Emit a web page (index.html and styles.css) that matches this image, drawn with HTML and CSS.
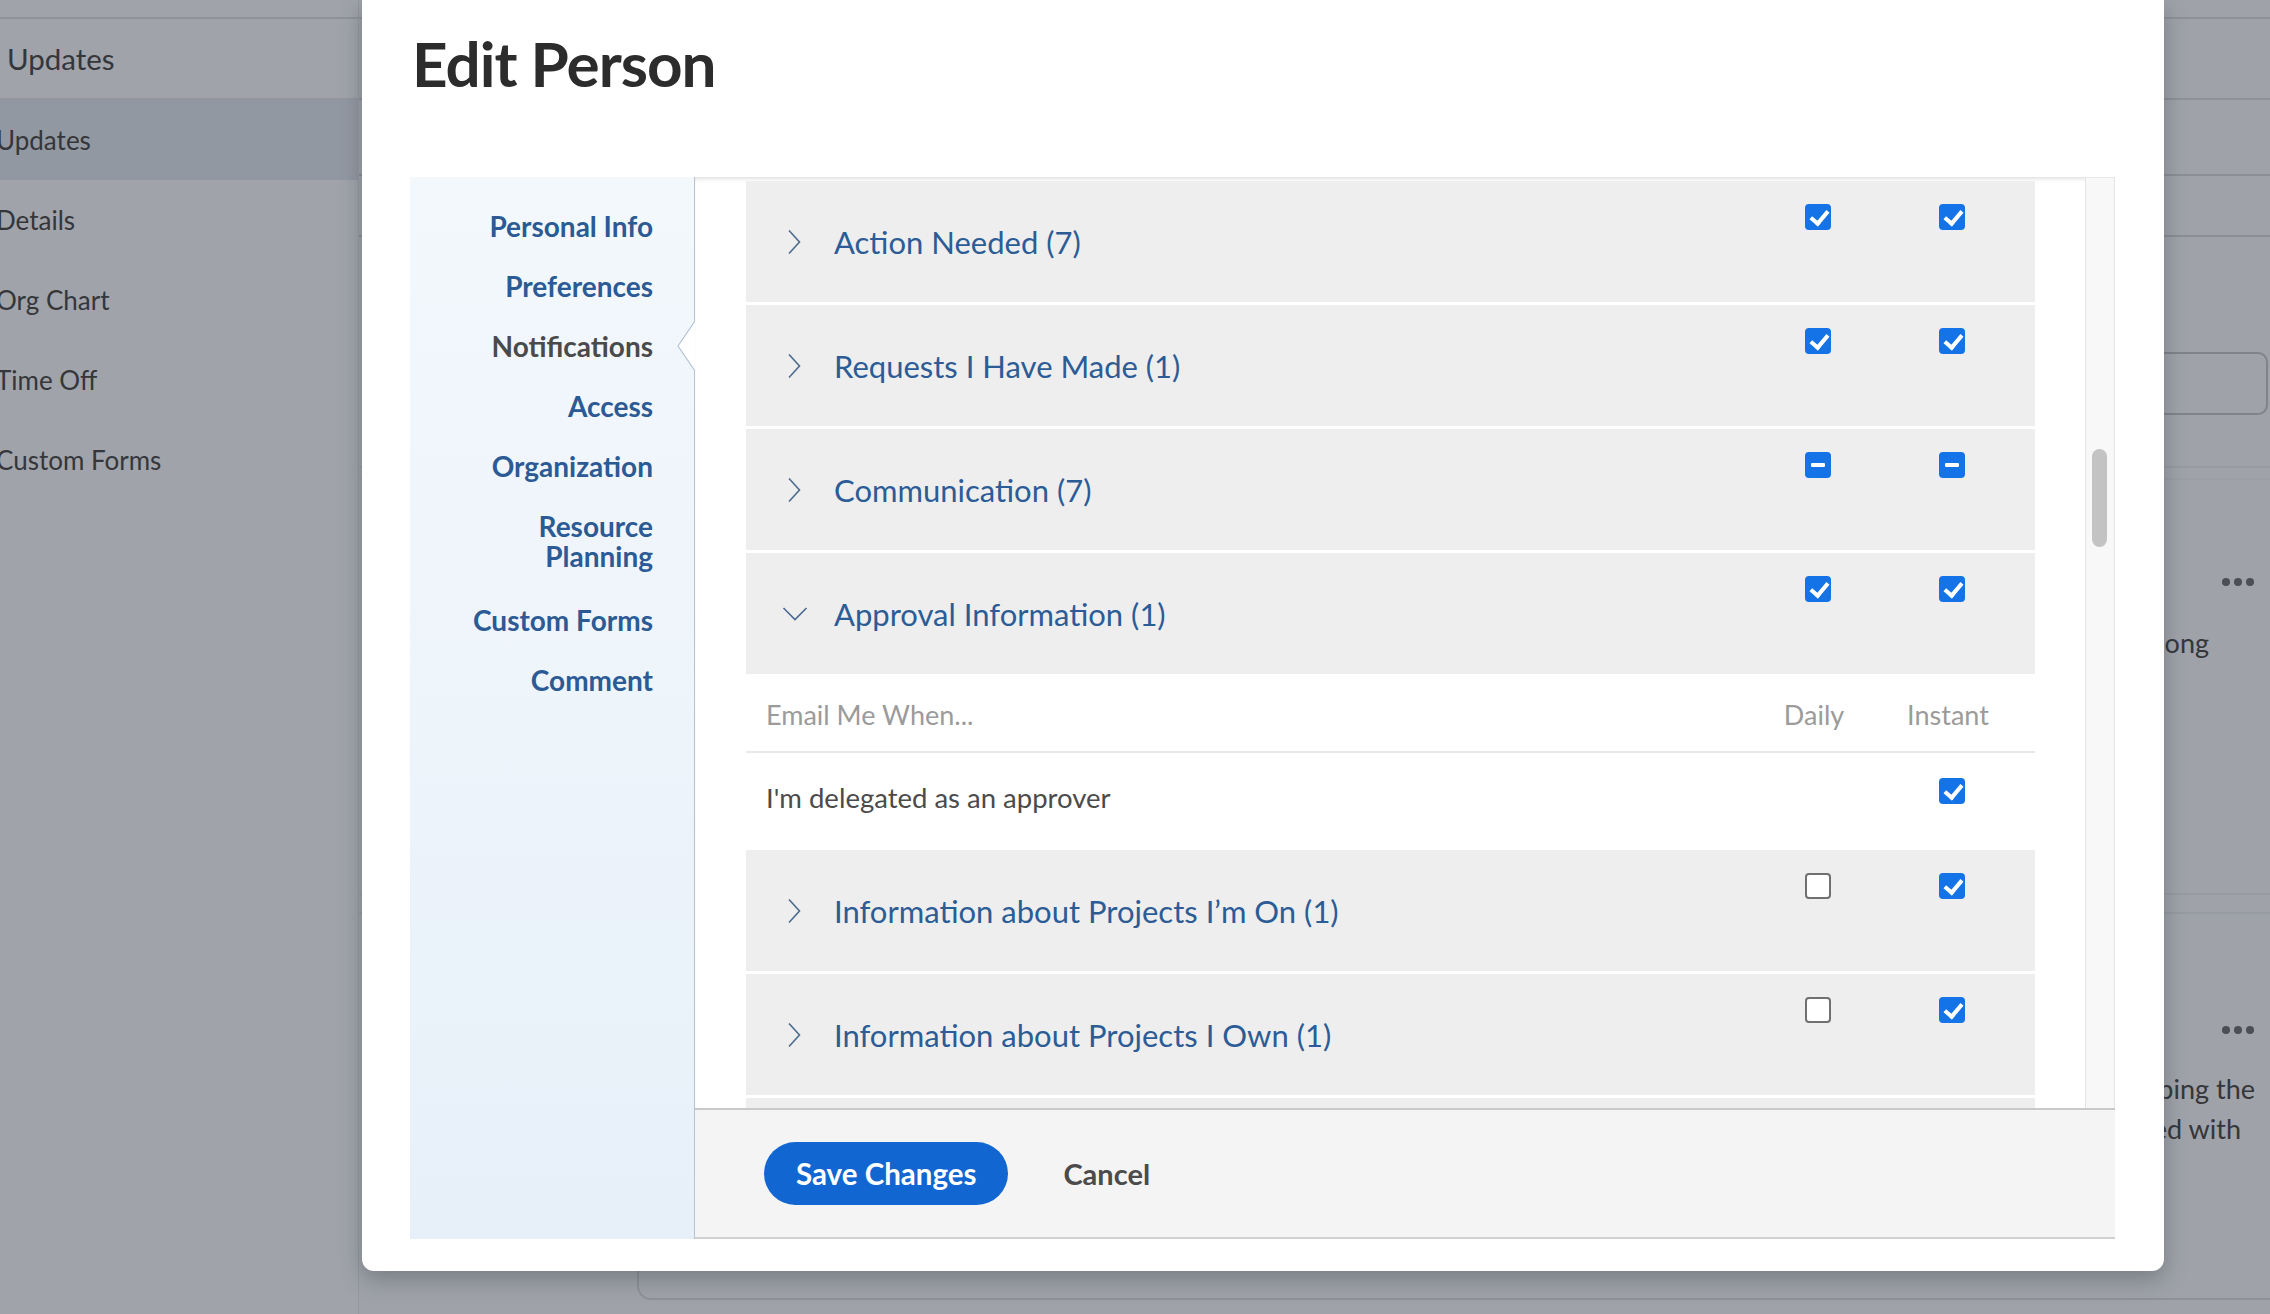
FILE: index.html
```html
<!DOCTYPE html>
<html lang="en">
<head>
<meta charset="utf-8">
<title>Edit Person</title>
<link rel="stylesheet" href="styles.css">
</head>
<body>
<div class="page">
  <aside class="side">
    <div class="side-top"></div>
    <div class="side-head">Updates</div>
    <ul class="side-list">
      <li class="sel">Updates</li>
      <li>Details</li>
      <li>Org Chart</li>
      <li>Time Off</li>
      <li>Custom Forms</li>
    </ul>
  </aside>

  <main class="bg-main">
    <div class="bg-l1"></div>
    <div class="bg-l2"></div>
    <div class="bg-l3"></div>
    <div class="bg-l4"></div>
    <div class="bg-filter"><div class="bg-input"></div></div>
    <div class="bg-gap"></div>
    <div class="bg-card1">
      <div class="dots"><i></i><i></i><i></i></div>
      <p class="bg-text t1">The request is moving along</p>
    </div>
    <div class="bg-sep"></div>
    <div class="bg-card2">
      <div class="dots"><i></i><i></i><i></i></div>
      <p class="bg-text t2">Thanks for helping the</p>
      <p class="bg-text t3">team that worked with</p>
    </div>
  </main>

  <div class="modal">
    <h1 class="modal-title">Edit Person</h1>
    <div class="panel">
      <nav class="tabs">
        <a class="tab">Personal Info</a>
        <a class="tab">Preferences</a>
        <a class="tab active">Notifications</a>
        <a class="tab">Access</a>
        <a class="tab">Organization</a>
        <a class="tab two">Resource<br>Planning</a>
        <a class="tab">Custom Forms</a>
        <a class="tab">Comment</a>
        <svg class="notch" viewBox="0 0 18 50" width="18" height="50"><polygon points="18,0 1,25 18,50" fill="#fff"/><polyline points="18,0 1,25 18,50" fill="none" stroke="#b4c4d6" stroke-width="1.2"/></svg>
      </nav>

      <section class="content">
        <div class="viewport">
          <div class="list">
            <div class="row">
              <span class="chev"><svg viewBox="0 0 14 26" width="14" height="26"><polyline points="2,1.5 12.5,13 2,24.5" fill="none" stroke="#4b6a90" stroke-width="1.6"/></svg></span>
              <span class="label">Action Needed (7)</span>
              <span class="cell"><span class="cb on"></span></span>
              <span class="cell"><span class="cb on"></span></span>
            </div>
            <div class="row">
              <span class="chev"><svg viewBox="0 0 14 26" width="14" height="26"><polyline points="2,1.5 12.5,13 2,24.5" fill="none" stroke="#4b6a90" stroke-width="1.6"/></svg></span>
              <span class="label">Requests I Have Made (1)</span>
              <span class="cell"><span class="cb on"></span></span>
              <span class="cell"><span class="cb on"></span></span>
            </div>
            <div class="row">
              <span class="chev"><svg viewBox="0 0 14 26" width="14" height="26"><polyline points="2,1.5 12.5,13 2,24.5" fill="none" stroke="#4b6a90" stroke-width="1.6"/></svg></span>
              <span class="label">Communication (7)</span>
              <span class="cell"><span class="cb mixed"></span></span>
              <span class="cell"><span class="cb mixed"></span></span>
            </div>
            <div class="row">
              <span class="chev down"><svg viewBox="0 0 26 16" width="26" height="16"><polyline points="1.5,2 13,13.5 24.5,2" fill="none" stroke="#4b6a90" stroke-width="1.6"/></svg></span>
              <span class="label">Approval Information (1)</span>
              <span class="cell"><span class="cb on"></span></span>
              <span class="cell"><span class="cb on"></span></span>
            </div>

            <div class="subhead">
              <span class="sub-title">Email Me When...</span>
              <span class="sub-col">Daily</span>
              <span class="sub-col">Instant</span>
            </div>
            <div class="subrow">
              <span class="sub-text">I'm delegated as an approver</span>
              <span class="cell"></span>
              <span class="cell"><span class="cb on"></span></span>
            </div>

            <div class="row">
              <span class="chev"><svg viewBox="0 0 14 26" width="14" height="26"><polyline points="2,1.5 12.5,13 2,24.5" fill="none" stroke="#4b6a90" stroke-width="1.6"/></svg></span>
              <span class="label">Information about Projects I’m On (1)</span>
              <span class="cell"><span class="cb off"></span></span>
              <span class="cell"><span class="cb on"></span></span>
            </div>
            <div class="row">
              <span class="chev"><svg viewBox="0 0 14 26" width="14" height="26"><polyline points="2,1.5 12.5,13 2,24.5" fill="none" stroke="#4b6a90" stroke-width="1.6"/></svg></span>
              <span class="label">Information about Projects I Own (1)</span>
              <span class="cell"><span class="cb off"></span></span>
              <span class="cell"><span class="cb on"></span></span>
            </div>
            <div class="row">
              <span class="chev"></span>
              <span class="label"></span>
              <span class="cell"></span>
              <span class="cell"></span>
            </div>
          </div>
          <div class="scrollbar"><div class="thumb"></div></div>
        </div>
        <footer class="footer">
          <button class="btn-primary">Save Changes</button>
          <button class="btn-link">Cancel</button>
        </footer>
      </section>
    </div>
  </div>
</div>
</body>
</html>
```

FILE: styles.css
```css
* { box-sizing: border-box; }

body {
  margin: 0;
  width: 2270px;
  height: 1314px;
  overflow: hidden;
  background: #9fa2a9;
  font-family: Lato, "Open Sans", "Liberation Sans", sans-serif;
}

.page {
  position: relative;
  display: flex;
  width: 2270px;
  height: 1314px;
}

/* ---------- dimmed background app ---------- */
.side {
  width: 359px;
  flex: none;
  background: #a0a3aa;
  border-right: 1px solid #95989f;
}
.side-top { height: 19px; border-bottom: 2px solid #8f9299; }
.side-head {
  height: 81px;
  line-height: 79px;
  border-bottom: 2px solid #93969d;
  padding-left: 7px;
  font-size: 29.5px;
  color: #34363a;
}
.side-list { list-style: none; margin: 0; padding: 0; }
.side-list li {
  height: 80px;
  line-height: 80px;
  font-size: 26px;
  color: #34363a;
  text-indent: -4px;
}
.side-list li.sel { background: #9298a1; }

.bg-main {
  flex: 1;
  display: flex;
  flex-direction: column;
}
.bg-l1 { height: 19px; border-bottom: 2px solid #8e9198; flex: none; }
.bg-l2 { height: 81px; border-bottom: 2px solid #8e9198; flex: none; }
.bg-l3 { height: 76px; border-bottom: 2px solid #8b8e95; flex: none; }
.bg-l4 { height: 61px; border-bottom: 2px solid #8b8e95; flex: none; }
.bg-filter {
  height: 231px;
  flex: none;
  padding-top: 115px;
  display: flex;
  justify-content: flex-end;
  align-items: flex-start;
  border-bottom: 2px solid #979aa1;
}
.bg-input {
  width: 1200px;
  height: 63px;
  border: 2px solid #80838a;
  border-radius: 10px;
  margin-right: 2px;
}
.bg-gap { height: 12px; flex: none; border-bottom: 2px solid #9b9ea5; }
.bg-card1 {
  height: 415px;
  flex: none;
  border-bottom: 2px solid #989ba2;
  padding-top: 98px;
}
.bg-sep { height: 19px; flex: none; border-bottom: 2px solid #969aa1; }
.bg-card2 {
  height: 386px;
  flex: none;
  margin-left: 278px;
  border-left: 2px solid #8e9198;
  border-bottom: 2px solid #8e9198;
  border-bottom-left-radius: 14px;
  padding-top: 112px;
}
.dots {
  display: flex;
  justify-content: flex-end;
  gap: 4px;
  padding-right: 16px;
  height: 8px;
}
.dots i {
  width: 8px;
  height: 8px;
  border-radius: 50%;
  background: #4b4e53;
}
.bg-text {
  margin: 0;
  text-align: right;
  font-size: 27px;
  line-height: 40px;
  color: #34363a;
}
.t1 { margin-top: 37px; padding-right: 61px; }
.t2 { margin-top: 35px; padding-right: 15px; }
.t3 { padding-right: 29px; }

/* ---------- modal ---------- */
.modal {
  position: absolute;
  left: 362px;
  top: 0;
  width: 1802px;
  height: 1271px;
  background: #fff;
  border-radius: 0 0 12px 12px;
  box-shadow: 0 8px 22px rgba(50, 54, 64, 0.35);
  padding: 31px 49px 32px 48px;
  display: flex;
  flex-direction: column;
}
.modal-title {
  margin: 0;
  padding-left: 2px;
  font-size: 62px;
  line-height: 64px;
  font-weight: 700;
  letter-spacing: -1px;
  color: #2c2c2c;
}
.panel {
  margin-top: 82px;
  flex: 1;
  display: flex;
  min-height: 0;
}

/* left tabs */
.tabs {
  position: relative;
  width: 285px;
  flex: none;
  display: flex;
  flex-direction: column;
  align-items: flex-end;
  gap: 30px;
  padding: 34px 41px 0 0;
  background: linear-gradient(180deg, #f3f8fc 0%, #e7f0f9 100%);
  border-right: 1px solid #b4c4d6;
}
.tab {
  display: block;
  text-align: right;
  font-size: 28px;
  line-height: 30px;
  font-weight: 700;
  color: #2b5a94;
}
.tab.active { color: #4a4a4a; }
.tab.two { margin-bottom: 4px; }
.notch {
  position: absolute;
  right: -1px;
  top: 144px;
}

/* content */
.content {
  flex: 1;
  display: flex;
  flex-direction: column;
  min-width: 0;
}
.viewport {
  flex: 1;
  display: flex;
  min-height: 0;
  overflow: hidden;
  border-top: 1px solid #e6e6e6;
  box-shadow: inset 0 3px 4px -2px rgba(0, 0, 0, 0.12);
}
.list {
  flex: 1;
  padding: 3px 50px 0 51px;
  overflow: hidden;
}
.row {
  display: grid;
  grid-template-columns: 88px 1fr 134px 134px 16px;
  height: 121px;
  margin-bottom: 3px;
  background: #eeeeee;
}
.chev {
  padding-left: 41px;
  align-self: center;
  display: flex;
  align-items: center;
  height: 26px;
}
.chev.down { padding-left: 36px; }
.chev svg { display: block; }
.label {
  align-self: center;
  font-size: 31px;
  color: #2c5c96;
  white-space: nowrap;
}
.cell {
  display: flex;
  justify-content: center;
  align-items: flex-start;
  padding-top: 23px;
}

/* checkbox */
.cb {
  position: relative;
  display: block;
  width: 26px;
  height: 26px;
  border-radius: 4px;
  background: #1473e6;
}
.cb.on::after {
  content: "";
  position: absolute;
  left: 9px;
  top: 3px;
  width: 7px;
  height: 14px;
  border: solid #fff;
  border-width: 0 4px 4px 0;
  transform: rotate(40deg);
}
.cb.mixed::after {
  content: "";
  position: absolute;
  left: 6px;
  top: 11px;
  width: 14px;
  height: 4px;
  border-radius: 1px;
  background: #fff;
}
.cb.off {
  background: #fff;
  border: 2px solid #707070;
}

/* expanded section */
.subhead {
  display: grid;
  grid-template-columns: 1fr 134px 134px 16px;
  align-items: center;
  height: 76px;
  border-bottom: 2px solid #e8e8e8;
  background: #fff;
  font-size: 27px;
  color: #9b9b9b;
}
.sub-title { padding-left: 20px; }
.sub-col { text-align: center; padding-right: 8px; }
.subrow {
  display: grid;
  grid-template-columns: 1fr 134px 134px 16px;
  height: 96px;
  background: #fff;
  margin-bottom: 1px;
}
.sub-text {
  padding-left: 20px;
  padding-top: 28px;
  font-size: 27.5px;
  line-height: 34px;
  color: #4b4b4b;
}
.subrow .cell { padding-top: 25px; }

/* scrollbar */
.scrollbar {
  width: 30px;
  flex: none;
  background: #f8f8f8;
  border-left: 1px solid #e4e4e4;
  border-right: 1px solid #e4e4e4;
  padding: 271px 0 0 6px;
}
.thumb {
  width: 15px;
  height: 98px;
  border-radius: 8px;
  background: #c3c3c3;
}

/* footer */
.footer {
  height: 131px;
  flex: none;
  display: flex;
  align-items: center;
  gap: 55px;
  padding-left: 69px;
  background: #f4f4f4;
  border-top: 2px solid #c9c9c9;
  border-bottom: 2px solid #d0d0d0;
}
.btn-primary {
  height: 63px;
  padding: 0 32px;
  border: none;
  border-radius: 32px;
  background: #1166d1;
  color: #fff;
  font-family: Lato, "Open Sans", sans-serif;
  font-size: 29.5px;
  font-weight: 700;
}
.btn-link {
  border: none;
  background: none;
  padding: 0;
  color: #4b4b4b;
  font-family: Lato, "Open Sans", sans-serif;
  font-size: 29px;
  font-weight: 700;
}
```
